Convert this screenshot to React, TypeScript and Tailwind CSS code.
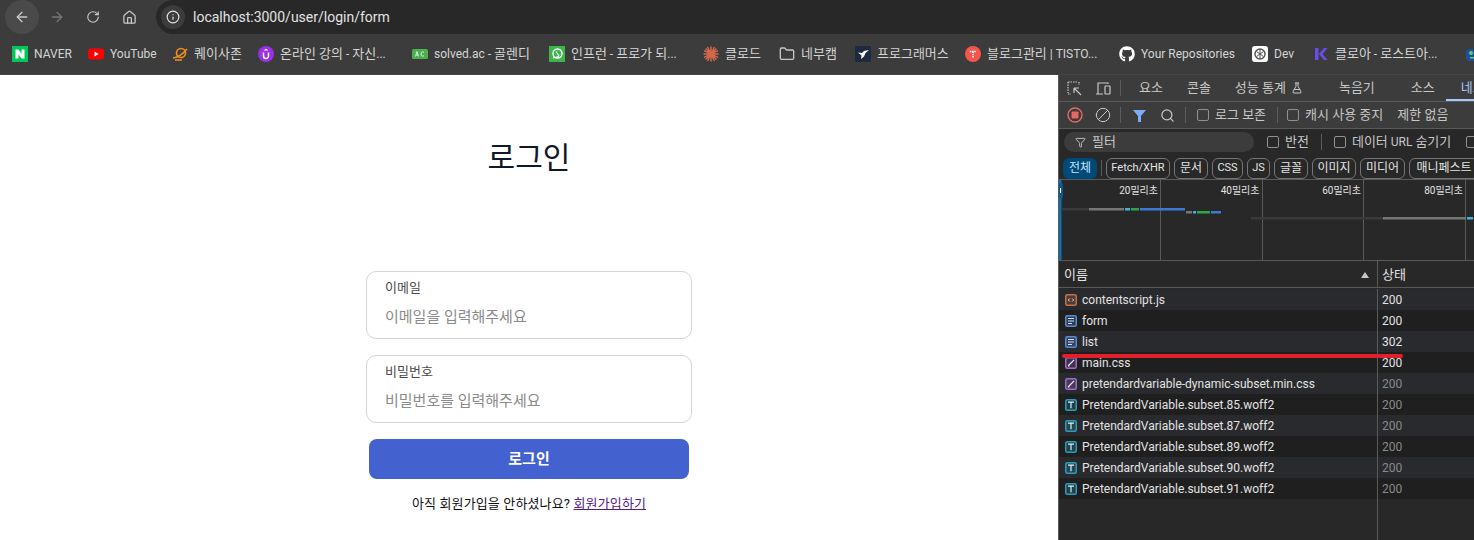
import React from "react";
import { ArrowLeft, ArrowRight, RotateCw, Home, Info, Search, Folder, FlaskConical, Filter, Ban } from "lucide-react";
import { FaGithub } from "react-icons/fa";

const FONT = { fontFamily: 'Roboto, "Noto Sans CJK KR", sans-serif' };

/* Hangul in the reference runs about one pixel larger than the Latin text beside it. */
function Ko({ t }: { t: string }) {
  const parts = t.split(/([\uAC00-\uD7A3]+(?: [\uAC00-\uD7A3]+)*)/);
  return (
    <>
      {parts.map((p, i) => (i % 2 === 1 ? <span key={i} className="text-[13px]">{p}</span> : <span key={i}>{p}</span>))}
    </>
  );
}

function Naver() {
  return (
    <svg width="16" height="16" viewBox="0 0 16 16"><rect width="16" height="16" fill="#03c75a" /><path d="M3.500 3.500h3l3 4.300V3.500h3v9h-3l-3-4.300v4.300h-3z" fill="#fff" /></svg>
  );
}
function Youtube() {
  return (
    <svg width="16" height="16" viewBox="0 0 16 16"><rect y="2.500" width="16" height="11" rx="3" fill="#ff0000" /><path d="M6.500 5.600 10.600 8l-4.100 2.400z" fill="#fff" /></svg>
  );
}
function Kei() {
  return (
    <svg width="16" height="16" viewBox="0 0 16 16" fill="none" stroke="#f0901e" strokeWidth="1.600"><circle cx="9" cy="7" r="4.500" /><path d="M1 12c4 0 10-4 14-9M3 14h7" /></svg>
  );
}
function Udemy() {
  return (
    <svg width="16" height="16" viewBox="0 0 16 16"><circle cx="8" cy="8" r="8" fill="#9b30e8" /><path d="M5.500 6.500V10a2.500 2.500 0 0 0 5 0V6.500" fill="none" stroke="#fff" strokeWidth="1.500" /><path d="M8 2.800 10.500 4.400H5.500z" fill="#fff" /></svg>
  );
}
function Solved() {
  return (
    <svg width="16" height="16" viewBox="0 0 16 16"><rect y="3" width="16" height="10" rx="1.500" fill="#4cb050" /><path d="M3.500 10.500 5 5.500l1.500 5M4 9h2M12 6.300c-1.800-1.200-3 0-3 1.700s1.200 2.900 3 1.700" fill="none" stroke="#dff5df" strokeWidth="0.900" /></svg>
  );
}
function Inflearn() {
  return (
    <svg width="16" height="16" viewBox="0 0 16 16"><rect width="16" height="16" fill="#3cb54a" /><circle cx="8.500" cy="7.500" r="4.500" fill="none" stroke="#fff" strokeWidth="1.400" /><path d="M7 5.500 10 10M4 12l6-1.500" fill="none" stroke="#fff" strokeWidth="1.200" /></svg>
  );
}
function Claude() {
  return (
    <svg width="16" height="16" viewBox="0 0 16 16" stroke="#d4694a" strokeWidth="1.500" strokeLinecap="round"><path d="M8 1v14M1 8h14M3 3l10 10M13 3 3 13M4.800 1.500l6.400 13M11.200 1.500l-6.400 13M1.500 4.800l13 6.400M14.500 4.800l-13 6.400" /></svg>
  );
}
function Programmers() {
  return (
    <svg width="16" height="16" viewBox="0 0 16 16"><rect width="16" height="16" rx="1" fill="#1e2a3f" /><path d="M3 6.500 7 7l2-2 5-1-3.500 3L9 10.500l-3 2.500.5-3.500z" fill="#fff" /></svg>
  );
}
function Tistory() {
  return (
    <svg width="16" height="16" viewBox="0 0 16 16"><circle cx="8" cy="8" r="8" fill="#f5554a" /><path d="M4.800 5.500h6.400M8 5.500v6" stroke="#fff" strokeWidth="1.600" strokeDasharray="1.600 0.600" /></svg>
  );
}
function Dev() {
  return (
    <svg width="16" height="16" viewBox="0 0 16 16"><rect width="16" height="16" rx="3" fill="#fff" /><circle cx="8" cy="8" r="5" fill="none" stroke="#555" strokeWidth="1.400" /><path d="M4.500 5.500 11.500 10.500M11.500 5.500 4.500 10.500M8 3v10" stroke="#555" strokeWidth="1" /></svg>
  );
}
function Kloa() {
  return (
    <svg width="16" height="16" viewBox="0 0 16 16"><path d="M2 2h3.500v12H2zM6 8l5-6h3.500l-5 6 5 6H11z" fill="#6a4de8" /></svg>
  );
}
function Last() {
  return (
    <svg width="16" height="16" viewBox="0 0 16 16"><rect y="3" width="16" height="12" rx="3" fill="#1d4f9c" /><circle cx="5" cy="7" r="2" fill="#5fd068" /><circle cx="11" cy="7" r="2" fill="#e0508a" /><rect x="4" y="11" width="8" height="1.500" fill="#5fd068" /></svg>
  );
}

const bookmarks = [
  { icon: <Naver />, text: "NAVER", w: "w-[60px]", gap: "mr-4" },
  { icon: <Youtube />, text: "YouTube", w: "w-[68px]", gap: "mr-4" },
  { icon: <Kei />, text: "퀘이사존", w: "w-[70px]", gap: "mr-4" },
  { icon: <Udemy />, text: "온라인 강의 - 자신...", w: "w-[132px]", gap: "mr-[22px]" },
  { icon: <Solved />, text: "solved.ac - 골렌디", w: "w-[121px]", gap: "mr-4" },
  { icon: <Inflearn />, text: "인프런 - 프로가 되...", w: "w-[132px]", gap: "mr-[22px]" },
  { icon: <Claude />, text: "클로드", w: "w-[58px]", gap: "mr-[18px]" },
  { icon: <Folder size={16} color="#c7c7c7" />, text: "네부캠", w: "w-[60px]", gap: "mr-4" },
  { icon: <Programmers />, text: "프로그래머스", w: "w-[94px]", gap: "mr-4" },
  { icon: <Tistory />, text: "블로그관리 | TISTO...", w: "w-[133px]", gap: "mr-[21px]" },
  { icon: <FaGithub size={16} color="#fff" />, text: "Your Repositories", w: "w-[116px]", gap: "mr-[17px]" },
  { icon: <Dev />, text: "Dev", w: "w-[43px]", gap: "mr-[18px]" },
  { icon: <Kloa />, text: "클로아 - 로스트아...", w: "w-[126px]", gap: "mr-[27px]" },
  { icon: <Last />, text: "", w: "w-[16px]", gap: "" },
];

function Browser() {
  return (
    <div className="bg-[#3c3c3c]">
      <div className="h-[36px] flex items-start pl-[5px] text-[#c7c7c7]">
        <div className="w-[34px] h-[34px] rounded-full bg-[#4a4a4a] flex items-center justify-center"><ArrowLeft size={16} strokeWidth={2} /></div>
        <div className="w-[36px] h-[34px] flex items-center justify-center text-[#757575]"><ArrowRight size={16} strokeWidth={2} /></div>
        <div className="w-[36px] h-[34px] flex items-center justify-center"><RotateCw size={14} strokeWidth={2} /></div>
        <div className="w-[36px] h-[34px] flex items-center justify-center"><Home size={15} strokeWidth={2} /></div>
        <div className="ml-[9px] flex-1 h-[34px] rounded-l-full bg-[#282828] flex items-center pl-[5px]">
          <div className="w-[24px] h-[24px] rounded-full bg-[#3c3c3c] flex items-center justify-center text-[#e3e3e3]"><Info size={14} /></div>
          <span className="ml-[8px] text-[14px] text-[#e3e3e3]">localhost:3000/user/login/form</span>
        </div>
      </div>
      <div className="h-[39px] flex items-center pl-3 pb-[2px] text-[12px] text-[#d4d4d4] border-b border-[#444]">
        {bookmarks.map((b, i) => (
          <div key={i} className={`flex items-center shrink-0 gap-[6px] whitespace-nowrap ${b.w} ${b.gap}`}>
            <span className="shrink-0 w-4 h-4 flex">{b.icon}</span>
            {b.text && <span><Ko t={b.text} /></span>}
          </div>
        ))}
      </div>
    </div>
  );
}

function Field({ label, placeholder }: { label: string; placeholder: string }) {
  return (
    <div className="w-[326px] h-[68px] rounded-[10px] border border-[#d1d5db] px-[18px] pt-[6px]">
      <div className="text-[13px] leading-[20px] text-[#4b4b4b]">{label}</div>
      <div className="mt-[8px] text-[15px] leading-[22px] text-[#8b8b8b]">{placeholder}</div>
    </div>
  );
}

function LoginPage() {
  return (
    <main className="flex-1 bg-white flex flex-col items-center pt-[60px]">
      <h1 className="text-[30px] leading-[46px] font-normal text-[#111827]">로그인</h1>
      <div className="mt-[90px] flex flex-col items-center">
        <Field label="이메일" placeholder="이메일을 입력해주세요" />
        <div className="mt-4"><Field label="비밀번호" placeholder="비밀번호를 입력해주세요" /></div>
        <button className="mt-4 w-[320px] h-10 rounded-lg bg-[#4461d0] text-white text-[15px] font-semibold">로그인</button>
        <p className="mt-[15px] text-[13px] leading-5 tracking-[0.14px] text-[#111]">
          아직 회원가입을 안하셨나요? <a className="underline text-[#551a8b]">회원가입하기</a>
        </p>
      </div>
    </main>
  );
}

function Check({ label, cls }: { label: string; cls?: string }) {
  return (
    <div className={`flex items-center gap-[6px] shrink-0 ${cls ?? ""}`}>
      <span className="w-3 h-3 rounded-[2px] border border-[#8e9093]" />
      {label && <span><Ko t={label} /></span>}
    </div>
  );
}

const Sep = ({ cls }: { cls: string }) => <span className={`w-px h-4 bg-[#5c5c5c] shrink-0 ${cls}`} />;

const chips = [
  { t: "Fetch/XHR", w: "w-[64px]", f: "text-[11px]" },
  { t: "문서", w: "w-[34px]", f: "text-[12px]" },
  { t: "CSS", w: "w-[31px]", f: "text-[11px]" },
  { t: "JS", w: "w-[23px]", f: "text-[11px]" },
  { t: "글꼴", w: "w-[34px]", f: "text-[12px]" },
  { t: "이미지", w: "w-[44px]", f: "text-[12px]" },
  { t: "미디어", w: "w-[45px]", f: "text-[12px]" },
  { t: "매니페스트", w: "w-[70px]", f: "text-[12px]" },
];

const rows = [
  { n: "contentscript.js", s: "200", k: "js", dim: false },
  { n: "form", s: "200", k: "doc", dim: false },
  { n: "list", s: "302", k: "doc", dim: false },
  { n: "main.css", s: "200", k: "css", dim: false },
  { n: "pretendardvariable-dynamic-subset.min.css", s: "200", k: "css", dim: true },
  { n: "PretendardVariable.subset.85.woff2", s: "200", k: "font", dim: true },
  { n: "PretendardVariable.subset.87.woff2", s: "200", k: "font", dim: true },
  { n: "PretendardVariable.subset.89.woff2", s: "200", k: "font", dim: true },
  { n: "PretendardVariable.subset.90.woff2", s: "200", k: "font", dim: true },
  { n: "PretendardVariable.subset.91.woff2", s: "200", k: "font", dim: true },
];

function FileIcon({ k }: { k: string }) {
  const color = k === "js" ? "#c4714a" : k === "doc" ? "#5c8ad8" : k === "css" ? "#a06ccb" : "#2d9cba";
  return (
    <svg width="12" height="12" viewBox="0 0 12 12" fill="none" className="shrink-0">
      <rect x="0.750" y="0.750" width="10.500" height="10.500" rx="1.500" stroke={color} strokeWidth="1.500" fill={color} fillOpacity="0.250" />
      {k === "js" && <path d="M4.800 4.500 3.300 6l1.500 1.500M7.200 4.500 8.700 6 7.200 7.500" stroke="#fff" strokeWidth="0.800" />}
      {k === "doc" && <path d="M3 3.500h6M3 6h6M3 8.500h4" stroke="#cfe0ff" strokeWidth="1" />}
      {k === "css" && <path d="M3 9l6-6M3 9h1.500" stroke="#f2e3ff" strokeWidth="1.100" />}
      {k === "font" && <path d="M3 3.200h6M6 3.200v6" stroke="#d5f4ff" strokeWidth="1.200" />}
    </svg>
  );
}

function Timeline() {
  const labels = ["20밀리초", "40밀리초", "60밀리초", "80밀리초"];
  return (
    <div className="relative h-[81px] flex border-b border-[#5a5a5a] bg-[#282828]">
      {labels.map((l, i) => (
        <div key={l} className={`h-full border-r border-[#5a5a5a] text-right pr-[2px] pt-[3px] text-[10px] leading-[15px] text-[#e3e3e3] ${i === 0 ? "w-[102px]" : i === 3 ? "w-[102px]" : "w-[101.500px]"}`}>{l}</div>
      ))}
      <svg className="absolute left-0 top-0" width="415" height="80" viewBox="0 0 415 80">
        <rect x="0" y="0" width="2.500" height="80" fill="#0b6fb0" />
        <rect x="0" y="3" width="4" height="15" rx="1.500" fill="#0b5c94" />
        <rect x="1" y="8" width="1" height="5" fill="#fff" />
        <g>
          <rect x="2" y="28" width="28" height="2.500" fill="#3a3a3a" />
          <rect x="30" y="28" width="35" height="2.500" fill="#777" />
          <rect x="66" y="28" width="5" height="2.500" fill="#3cb6dc" />
          <rect x="72" y="28" width="8" height="2.500" fill="#2aa84a" />
          <rect x="81" y="28" width="45" height="2.500" fill="#3d78d8" />
          <rect x="127" y="31" width="6" height="2.500" fill="#777" />
          <rect x="134" y="31" width="3" height="2.500" fill="#3cb6dc" />
          <rect x="138" y="31" width="13" height="2.500" fill="#2aa84a" />
          <rect x="152" y="31" width="10" height="2.500" fill="#3d78d8" />
          <rect x="192" y="37" width="132" height="2.500" fill="#3a3a3a" />
          <rect x="324" y="37" width="83" height="2.500" fill="#777" />
          <rect x="408" y="37" width="6" height="2.500" fill="#3cb6dc" />
        </g>
      </svg>
    </div>
  );
}

function DevTools() {
  return (
    <aside className="relative w-[416px] shrink-0 bg-[#282828] border-l border-[#5a5a5a] flex flex-col text-[12px] text-[#c7c7c7] overflow-hidden">
      <div className="h-[27px] shrink-0 flex items-center border-b border-[#5a5a5a] bg-[#3c3c3c] whitespace-nowrap">
        <svg className="ml-[8px] shrink-0" width="15" height="15" viewBox="0 0 15 15" fill="none" stroke="#c7c7c7" strokeWidth="1.200"><path d="M1 1h9" strokeDasharray="1.500 1" /><path d="M1 1v11" strokeDasharray="1.500 1" /><path d="M1 13h3M12 1v3" strokeDasharray="1.500 1" /><path d="M14 14 7 7M7 7v5M7 7h5" /></svg>
        <svg className="ml-[13px] shrink-0" width="16" height="15" viewBox="0 0 16 15" fill="none" stroke="#c7c7c7" strokeWidth="1.200"><path d="M1 13h7M3 13V2h10v1" /><rect x="10" y="5" width="5" height="8" rx="0.500" /></svg>
        <Sep cls="ml-[9px]" />
        <span className="ml-[18px] text-[13px]">요소</span>
        <span className="ml-[24px] text-[13px]">콘솔</span>
        <span className="ml-[24px] text-[13px] flex items-center gap-[5px]">성능 통계 <FlaskConical size={12} /></span>
        <span className="ml-[36px] text-[13px]">녹음기</span>
        <span className="ml-[36px] text-[13px]">소스</span>
        <span className="ml-[26px] text-[13px] text-[#a8c7fa]">네트워크</span>
        <span className="absolute left-[387px] top-[24px] w-[30px] h-[2px] bg-[#a8c7fa]" />
      </div>
      <div className="h-[27px] shrink-0 flex items-center border-b border-[#5a5a5a] bg-[#3c3c3c] whitespace-nowrap">
        <svg className="ml-[8px] shrink-0" width="16" height="16" viewBox="0 0 16 16"><circle cx="8" cy="8" r="7" fill="none" stroke="#e46962" strokeWidth="1.400" /><rect x="4.500" y="4.500" width="7" height="7" rx="1" fill="#e46962" /></svg>
        <Ban className="ml-[12px] shrink-0 -scale-x-100" size={16} strokeWidth={1.500} />
        <Sep cls="ml-[9px]" />
        <svg className="ml-[12px] shrink-0" width="13" height="13" viewBox="0 0 13 13"><path d="M0 1h13L8 7v6H5V7z" fill="#7cacf8" /></svg>
        <Search className="ml-[14px] shrink-0" size={15} strokeWidth={2} />
        <Sep cls="ml-[10px]" />
        <Check label="로그 보존" cls="ml-[11px]" />
        <Sep cls="ml-[11px]" />
        <Check label="캐시 사용 중지" cls="ml-[9px]" />
        <span className="ml-[14px] text-[13px]">제한 없음</span>
      </div>
      <div className="h-[26px] shrink-0 flex items-center bg-[#282828] whitespace-nowrap">
        <div className="ml-[5px] w-[190px] h-[20px] shrink-0 rounded-full bg-[#3c3c3c] flex items-center pl-[11px] gap-[6px] text-[13px]">
          <Filter size={11} /> <span>필터</span>
        </div>
        <Check label="반전" cls="ml-[13px]" />
        <Sep cls="ml-[12px]" />
        <Check label="데이터 URL 숨기기" cls="ml-[12px]" />
        <Check label="" cls="ml-[15px]" />
      </div>
      <div className="h-[25px] shrink-0 flex items-center pt-[2px] bg-[#282828] whitespace-nowrap border-b border-[#5a5a5a]">
        <span className="ml-[4px] w-[34px] h-[21px] shrink-0 rounded-[6px] bg-[#004a77] text-[#c2e7ff] text-[12px] flex items-center justify-center">전체</span>
        <Sep cls="ml-[4px]" />
        <div className="ml-[4px] flex gap-[4px]">
          {chips.map((c) => (
            <span key={c.t} className={`${c.w} ${c.f} h-[21px] shrink-0 rounded-[6px] border border-[#757575] text-[#e3e3e3] flex items-center justify-center`}>{c.t}</span>
          ))}
        </div>
      </div>
      <Timeline />
      <div className="h-[27px] shrink-0 flex border-b border-[#5a5a5a] text-[#e3e3e3] text-[13px]">
        <div className="w-[319px] shrink-0 border-r border-[#5a5a5a] pl-[5px] pt-px flex items-center justify-between pr-[8px]">
          <span>이름</span>
          <span className="w-0 h-0 border-l-[4px] border-r-[4px] border-b-[6px] border-l-transparent border-r-transparent border-b-[#c7c7c7]" />
        </div>
        <div className="pl-[4px] pt-px flex items-center">상태</div>
      </div>
      <div className="flex-1 flex flex-col pt-px">
        {rows.map((r, i) => (
          <div key={r.n} className={`h-[21px] shrink-0 flex ${i % 2 === 0 ? "bg-[#292a2d]" : "bg-[#1f1f1f]"}`}>
            <div className="w-[319px] shrink-0 border-r border-[#5a5a5a] pl-[6px] flex items-center gap-[5px] text-[#e3e3e3]">
              <FileIcon k={r.k} />
              <span>{r.n}</span>
            </div>
            <div className={`pl-[4px] flex items-center ${r.dim ? "text-[#8a8a8a]" : "text-[#e3e3e3]"}`}>{r.s}</div>
          </div>
        ))}
        <div className="flex-1 flex"><div className="w-[319px] border-r border-[#5a5a5a]" /></div>
      </div>
    </aside>
  );
}

export default function App() {
  return (
    <div className="w-[1474px] h-[540px] overflow-hidden flex flex-col relative" style={FONT}>
      <Browser />
      <div className="flex-1 flex min-h-0">
        <LoginPage />
        <DevTools />
      </div>
      <div className="absolute left-[1062px] top-[354px] w-[341px] h-[4px] rounded-full bg-[#e0202a]" />
    </div>
  );
}
